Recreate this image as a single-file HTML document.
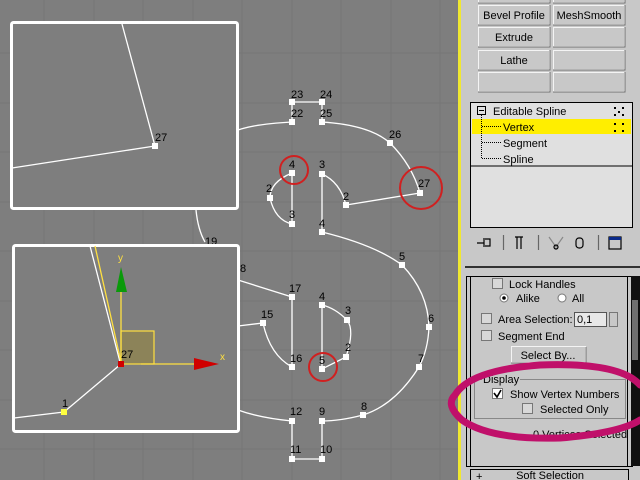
<!DOCTYPE html>
<html><head><meta charset="utf-8"><style>
html,body{margin:0;padding:0;width:640px;height:480px;overflow:hidden;background:#7f7f7f}
svg{display:block}
text{font-family:"Liberation Sans",sans-serif}
</style></head><body>
<svg width="640" height="480" viewBox="0 0 640 480" xmlns="http://www.w3.org/2000/svg">
<rect width="640" height="480" fill="#7e7e7e"/>
<!-- grid -->
<g stroke="#767676" stroke-width="1">
<line x1="44" y1="0" x2="44" y2="480"/><line x1="94" y1="0" x2="94" y2="480"/><line x1="143" y1="0" x2="143" y2="480"/><line x1="193" y1="0" x2="193" y2="480"/><line x1="242" y1="0" x2="242" y2="480"/><line x1="292" y1="0" x2="292" y2="480"/><line x1="341" y1="0" x2="341" y2="480"/><line x1="391" y1="0" x2="391" y2="480"/><line x1="440" y1="0" x2="440" y2="480"/>
<line x1="0" y1="53" x2="458" y2="53"/><line x1="0" y1="103" x2="458" y2="103"/><line x1="0" y1="152" x2="458" y2="152"/><line x1="0" y1="202" x2="458" y2="202"/><line x1="0" y1="251" x2="458" y2="251"/><line x1="0" y1="301" x2="458" y2="301"/><line x1="0" y1="350" x2="458" y2="350"/><line x1="0" y1="400" x2="458" y2="400"/><line x1="0" y1="449" x2="458" y2="449"/>
</g>
<!-- spline -->
<g fill="none" stroke="#fff" stroke-width="1.3">
<path d="M292 102 L322 102 M292 102 L292 122 M322 102 L322 122"/>
<path d="M322 122 Q370 125 390 143 Q412 165 420 193 L346 205 Q340 182 322 174 L322 232 Q375 245 402 265 Q428 292 429 327 Q428 350 419 367 Q395 405 363 415 Q340 421 322 421 L322 459 L292 459 L292 421 Q260 418 238 410"/>
<path d="M292 122 Q255 124 238 130"/>
<path d="M196 210 Q198 230 205 242"/>
<path d="M292 173 Q270 182 270 198 Q275 220 292 224 Z"/>
<path d="M238 280 L292 297 L292 367 Q270 355 263 323 L238 326"/>
<path d="M322 305 L322 369 L346 357 Q355 330 347 320 Q335 308 322 305"/>
</g>
<g fill="#fff">
<rect x="289" y="99" width="6" height="6"/><rect x="319" y="99" width="6" height="6"/><rect x="289" y="119" width="6" height="6"/><rect x="319" y="119" width="6" height="6"/><rect x="387" y="140" width="6" height="6"/><rect x="417" y="190" width="6" height="6"/><rect x="343" y="202" width="6" height="6"/><rect x="319" y="171" width="6" height="6"/><rect x="319" y="229" width="6" height="6"/><rect x="399" y="262" width="6" height="6"/><rect x="289" y="170" width="6" height="6"/><rect x="267" y="195" width="6" height="6"/><rect x="289" y="221" width="6" height="6"/><rect x="289" y="294" width="6" height="6"/><rect x="260" y="320" width="6" height="6"/><rect x="289" y="364" width="6" height="6"/><rect x="319" y="302" width="6" height="6"/><rect x="344" y="317" width="6" height="6"/><rect x="343" y="354" width="6" height="6"/><rect x="319" y="366" width="6" height="6"/><rect x="426" y="324" width="6" height="6"/><rect x="416" y="364" width="6" height="6"/><rect x="360" y="412" width="6" height="6"/><rect x="319" y="418" width="6" height="6"/><rect x="289" y="418" width="6" height="6"/><rect x="289" y="456" width="6" height="6"/><rect x="319" y="456" width="6" height="6"/>
</g>
<g font-size="11" fill="#000">
<text x="291" y="98">23</text><text x="320" y="98">24</text><text x="291" y="117">22</text><text x="320" y="117">25</text><text x="389" y="138">26</text><text x="418" y="187">27</text><text x="343" y="200">2</text><text x="319" y="168">3</text><text x="319" y="227">4</text><text x="399" y="260">5</text><text x="289" y="168">4</text><text x="266" y="192">2</text><text x="289" y="218">3</text><text x="289" y="292">17</text><text x="261" y="318">15</text><text x="290" y="362">16</text><text x="319" y="300">4</text><text x="345" y="314">3</text><text x="345" y="351">2</text><text x="319" y="364">5</text><text x="428" y="322">6</text><text x="418" y="362">7</text><text x="361" y="410">8</text><text x="319" y="415">9</text><text x="290" y="415">12</text><text x="290" y="453">11</text><text x="320" y="453">10</text><text x="205" y="245">19</text><text x="240" y="272">8</text>
</g>
<g fill="none" stroke="#d02020" stroke-width="2">
<circle cx="294" cy="170" r="14"/><circle cx="421" cy="188" r="21"/><circle cx="323" cy="367" r="14"/>
</g>
<!-- top inset -->
<rect x="11.5" y="22.5" width="226" height="186" rx="2" fill="#7e7e7e" stroke="#fff" stroke-width="3"/>
<path d="M122 24 L155 146 L12 168" fill="none" stroke="#fff" stroke-width="1.3"/>
<rect x="152" y="143" width="6" height="6" fill="#fff"/>
<text x="155" y="141" font-size="11" fill="#000">27</text>
<!-- bottom inset -->
<rect x="13.5" y="245.5" width="225" height="186" rx="2" fill="#7e7e7e" stroke="#fff" stroke-width="3"/>
<path d="M90 246 L120 362" stroke="#fff" stroke-width="1.3" fill="none"/>
<path d="M95 246 L121 362" stroke="#ffe040" stroke-width="1.3" fill="none"/>
<path d="M121 364 L64 412 L14 418" stroke="#fff" stroke-width="1.3" fill="none"/>
<rect x="121" y="331" width="33" height="33" fill="#8c8359" stroke="#ffe040" stroke-width="1.2"/>
<line x1="121" y1="364" x2="121" y2="292" stroke="#ffe040" stroke-width="1.3"/>
<polygon points="121,267 116,292 127,292" fill="#0a9a0a"/>
<line x1="141" y1="364" x2="196" y2="364" stroke="#ffe040" stroke-width="1.3"/>
<polygon points="194,358 219,364 194,370" fill="#d00000"/>
<text x="118" y="261" font-size="10" fill="#ffe040">y</text>
<text x="220" y="360" font-size="10" fill="#ffe040">x</text>
<rect x="118" y="361" width="6" height="6" fill="#d00000"/>
<rect x="61" y="409" width="6" height="6" fill="#ffff40"/>
<text x="121" y="358" font-size="11" fill="#000">27</text>
<text x="62" y="407" font-size="11" fill="#000">1</text>
<!-- panel -->
<rect x="458" y="0" width="3" height="480" fill="#f0e830"/>
<rect x="461" y="0" width="179" height="480" fill="#c8c8c8"/>
<g font-size="11" fill="#000" text-anchor="middle">
<g fill="#c8c8c8" stroke="#f4f4f4"><rect x="478.5" y="-14.5" width="71" height="17"/><rect x="553.5" y="-14.5" width="71" height="17"/><rect x="478.5" y="5.5" width="71" height="19"/><rect x="553.5" y="5.5" width="71" height="19"/><rect x="478.5" y="27.5" width="71" height="19"/><rect x="553.5" y="27.5" width="71" height="19"/><rect x="478.5" y="50.5" width="71" height="19"/><rect x="553.5" y="50.5" width="71" height="19"/><rect x="478.5" y="72.5" width="71" height="19"/><rect x="553.5" y="72.5" width="71" height="19"/></g>
<g fill="none" stroke="#707070"><path d="M550 -14 V3 H478 M625 -14 V3 H553 M550 5 V25 H478 M625 5 V25 H553 M550 27 V47 H478 M625 27 V47 H553 M550 50 V70 H478 M625 50 V70 H553 M550 72 V92 H478 M625 72 V92 H553"/></g>
<text x="514" y="19">Bevel Profile</text><text x="589" y="19">MeshSmooth</text><text x="514" y="41">Extrude</text><text x="514" y="64">Lathe</text>
</g>
<!-- stack -->
<rect x="470.5" y="102.5" width="162" height="125" fill="#e0e0e0" stroke="#000"/>
<rect x="472" y="119" width="159" height="15" fill="#ffee00"/>
<line x1="471" y1="166" x2="632" y2="166" stroke="#000"/>
<rect x="477.5" y="106.5" width="8" height="8" fill="none" stroke="#000"/>
<line x1="479" y1="110.5" x2="484" y2="110.5" stroke="#000"/>
<path d="M481.5 115 V158 M482 126.5 H502 M482 142.5 H502 M482 158.5 H502" stroke="#000" stroke-dasharray="1,1" fill="none"/>
<g font-size="11" fill="#000"><text x="493" y="115">Editable Spline</text><text x="503" y="131">Vertex</text><text x="503" y="147">Segment</text><text x="503" y="163">Spline</text></g>
<g fill="#000"><rect x="614" y="107" width="2" height="2"/><rect x="622" y="107" width="2" height="2"/><rect x="614" y="114" width="2" height="2"/><rect x="622" y="114" width="2" height="2"/><rect x="618" y="111" width="2" height="2"/><rect x="614" y="123" width="2" height="2"/><rect x="622" y="123" width="2" height="2"/><rect x="614" y="130" width="2" height="2"/><rect x="622" y="130" width="2" height="2"/></g>
<!-- icon row -->
<g stroke="#000" fill="none" stroke-width="1.2">
<path d="M477 243 H484 M484 238 V247 M485 239 H490 V246 H485"/>
<line x1="503.5" y1="235" x2="503.5" y2="250" stroke="#666"/>
<path d="M515 237 H523 M517 237 V249 M521 237 V249"/>
<line x1="538.5" y1="235" x2="538.5" y2="250" stroke="#666"/>
<path d="M549 237 L556 247 L563 237" stroke="#888"/>
<circle cx="556" cy="247" r="2"/>
<rect x="576" y="238" width="7" height="10" rx="3"/>
<line x1="598.5" y1="235" x2="598.5" y2="250" stroke="#666"/>
<rect x="609" y="237" width="12" height="12"/>
</g>
<rect x="609" y="237" width="12" height="3" fill="#0a2a8a"/>
<!-- rollout -->
<line x1="465" y1="267" x2="640" y2="267" stroke="#000" stroke-width="1.5"/>
<rect x="466.5" y="276.5" width="166" height="190" fill="none" stroke="#000"/>
<rect x="470.5" y="276.5" width="157" height="190" fill="none" stroke="#000"/>
<rect x="631" y="276" width="9" height="190" fill="#101010"/>
<rect x="632" y="300" width="6" height="60" fill="#707070"/>
<g fill="#d8d8d8" stroke="#777"><rect x="492.5" y="278.5" width="10" height="10"/><rect x="481.5" y="313.5" width="10" height="10"/><rect x="481.5" y="330.5" width="10" height="10"/><rect x="492.5" y="388.5" width="10" height="10" fill="#fff"/><rect x="522.5" y="403.5" width="10" height="10"/></g>
<path d="M494 393 L497 397 L501 390" stroke="#000" stroke-width="1.6" fill="none"/>
<circle cx="504" cy="298" r="4" fill="#fff" stroke="#777"/><circle cx="504" cy="298" r="1.8" fill="#000"/>
<circle cx="562" cy="298" r="4" fill="#fff" stroke="#777"/>
<rect x="574.5" y="312.5" width="32" height="14" fill="#e8e8e8" stroke="#555"/>
<rect x="609.5" y="312.5" width="8" height="14" fill="#c8c8c8" stroke="#777"/>
<rect x="511.5" y="346.5" width="74" height="16" fill="#c8c8c8" stroke="#f4f4f4"/>
<path d="M586 347 V363 H511" stroke="#707070" fill="none"/>
<rect x="474.5" y="379.5" width="151" height="39" fill="none" stroke="#888"/>
<rect x="482" y="373" width="38" height="12" fill="#c8c8c8"/>
<g font-size="11" fill="#000">
<text x="509" y="288">Lock Handles</text><text x="516" y="302">Alike</text><text x="572" y="302">All</text>
<text x="498" y="323">Area Selection:</text><text x="577" y="323">0,1</text>
<text x="498" y="340">Segment End</text><text x="548" y="359" text-anchor="middle">Select By...</text>
<text x="483" y="383">Display</text><text x="510" y="398">Show Vertex Numbers</text><text x="540" y="413">Selected Only</text>
<text x="533" y="438">0 Vertices Selected</text>
</g>
<rect x="470.5" y="469.5" width="158" height="14" fill="#c8c8c8" stroke="#000"/>
<text x="476" y="480" font-size="11">+</text>
<text x="550" y="479" font-size="11" text-anchor="middle">Soft Selection</text>
<!-- magenta ellipse -->
<path d="M455 395 Q470 370 540 365 Q620 362 640 385 M640 420 Q620 433 560 438 Q490 440 462 420 Q445 405 455 395" fill="none" stroke="#c0106a" stroke-width="7" stroke-linecap="round"/>
</svg>
</body></html>
